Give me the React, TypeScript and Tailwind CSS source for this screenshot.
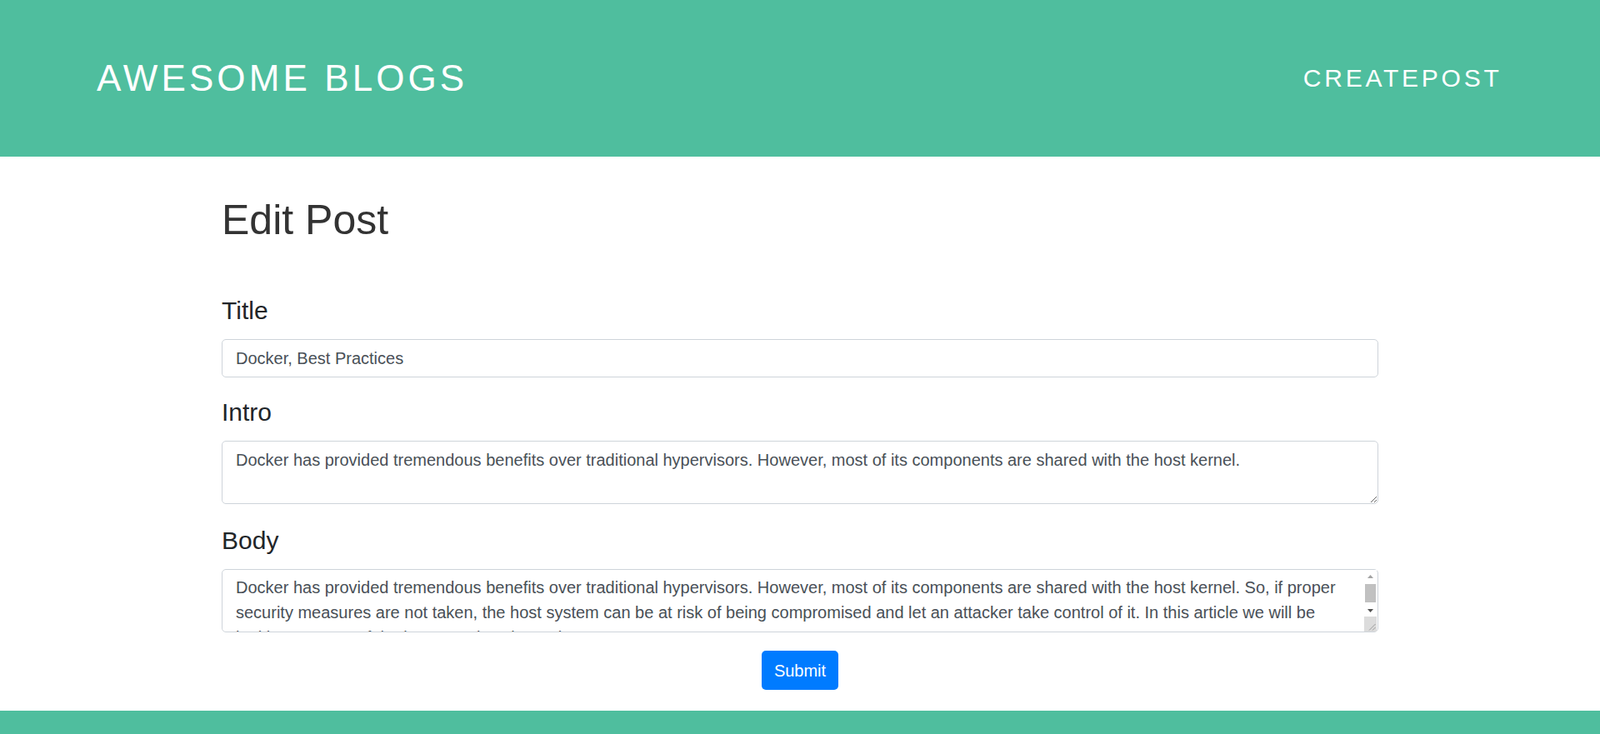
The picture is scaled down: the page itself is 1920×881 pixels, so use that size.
import React from "react";

const INTRO =
  "Docker has provided tremendous benefits over traditional hypervisors. However, most of its components are shared with the host kernel.";

const BODY =
  "Docker has provided tremendous benefits over traditional hypervisors. However, most of its components are shared with the host kernel. So, if proper security measures are not taken, the host system can be at risk of being compromised and let an attacker take control of it. In this article we will be looking at some of the best practices in Docker.";

const fieldCls =
  "block w-full rounded-[5px] border border-[#ced4da] bg-white pl-[16px] py-[7px] text-[20px] leading-[30px] text-[#495057] outline-none";

const Label = ({ children }: { children: React.ReactNode }) => (
  <label className="block text-[30px] leading-[36px] text-[#212529] mb-[16px]">{children}</label>
);

// native-looking scrollbar drawn over the body textarea
const FakeScrollbar = () => (
  <div className="absolute right-[2px] top-[1px] bottom-[1px] w-[15px] flex flex-col bg-white pointer-events-none">
    <div className="h-[15px] flex items-center justify-center">
      <svg width="7" height="4" viewBox="0 0 7 4">
        <path d="M3.5 0L7 4H0z" fill="#a3a3a3" />
      </svg>
    </div>
    <div className="flex-1 pt-[2px]">
      <div className="h-[22px] mx-[1px] bg-[#c1c1c1]" />
    </div>
    <div className="h-[15px] flex items-center justify-center">
      <svg width="7" height="4" viewBox="0 0 7 4">
        <path d="M0 0H7L3.5 4z" fill="#505050" />
      </svg>
    </div>
    <div className="h-[18px] bg-[#dcdcdc] relative">
      <svg className="absolute right-[1px] bottom-[1px]" width="9" height="9" viewBox="0 0 9 9">
        <path d="M8.5 1L1 8.5M8.5 5L5 8.5" stroke="#9a9a9a" strokeWidth="1" />
      </svg>
    </div>
  </div>
);

export default function App() {
  return (
    <div
      className="min-h-screen flex flex-col bg-white"
      style={{ fontFamily: '"Liberation Sans", Arial, sans-serif' }}
    >
      {/* Header */}
      <header className="h-[188px] shrink-0 bg-[#4fbe9e] flex items-center justify-between pl-[116px] pr-[117.5px]">
        <span className="text-[44px] tracking-[4.1px] text-white leading-none">AWESOME BLOGS</span>
        <a className="text-[30px] tracking-[3.75px] text-white leading-none cursor-pointer">CREATEPOST</a>
      </header>

      {/* Form */}
      <main className="w-[1388px] mx-auto">
        <h1 className="mt-[46px] text-[50px] leading-[60px] text-[#333]">Edit Post</h1>

        <form className="mt-[61px]" onSubmit={(e) => e.preventDefault()}>
          <div className="mb-[24px]">
            <Label>Title</Label>
            <input type="text" defaultValue="Docker, Best Practices" className={`${fieldCls} pr-[16px] h-[46px]`} />
          </div>
          <div className="mb-[26px]">
            <Label>Intro</Label>
            <textarea rows={2} defaultValue={INTRO} className={`${fieldCls} pr-[16px] h-[76px]`} />
          </div>
          <div className="mb-[22px]">
            <Label>Body</Label>
            <div className="relative">
              <textarea
                rows={2}
                defaultValue={BODY}
                className={`${fieldCls} pr-[32px] pt-[6px] h-[76px] overflow-hidden resize-none`}
              />
              <FakeScrollbar />
            </div>
          </div>
          <div className="flex justify-center">
            <button
              type="submit"
              className="h-[47px] px-[15px] rounded-[5px] bg-[#007bff] text-white text-[20px] leading-[30px]"
            >
              Submit
            </button>
          </div>
        </form>
      </main>

      {/* Footer */}
      <footer className="mt-[25px] h-[80px] shrink-0 bg-[#4fbe9e]" />
    </div>
  );
}
